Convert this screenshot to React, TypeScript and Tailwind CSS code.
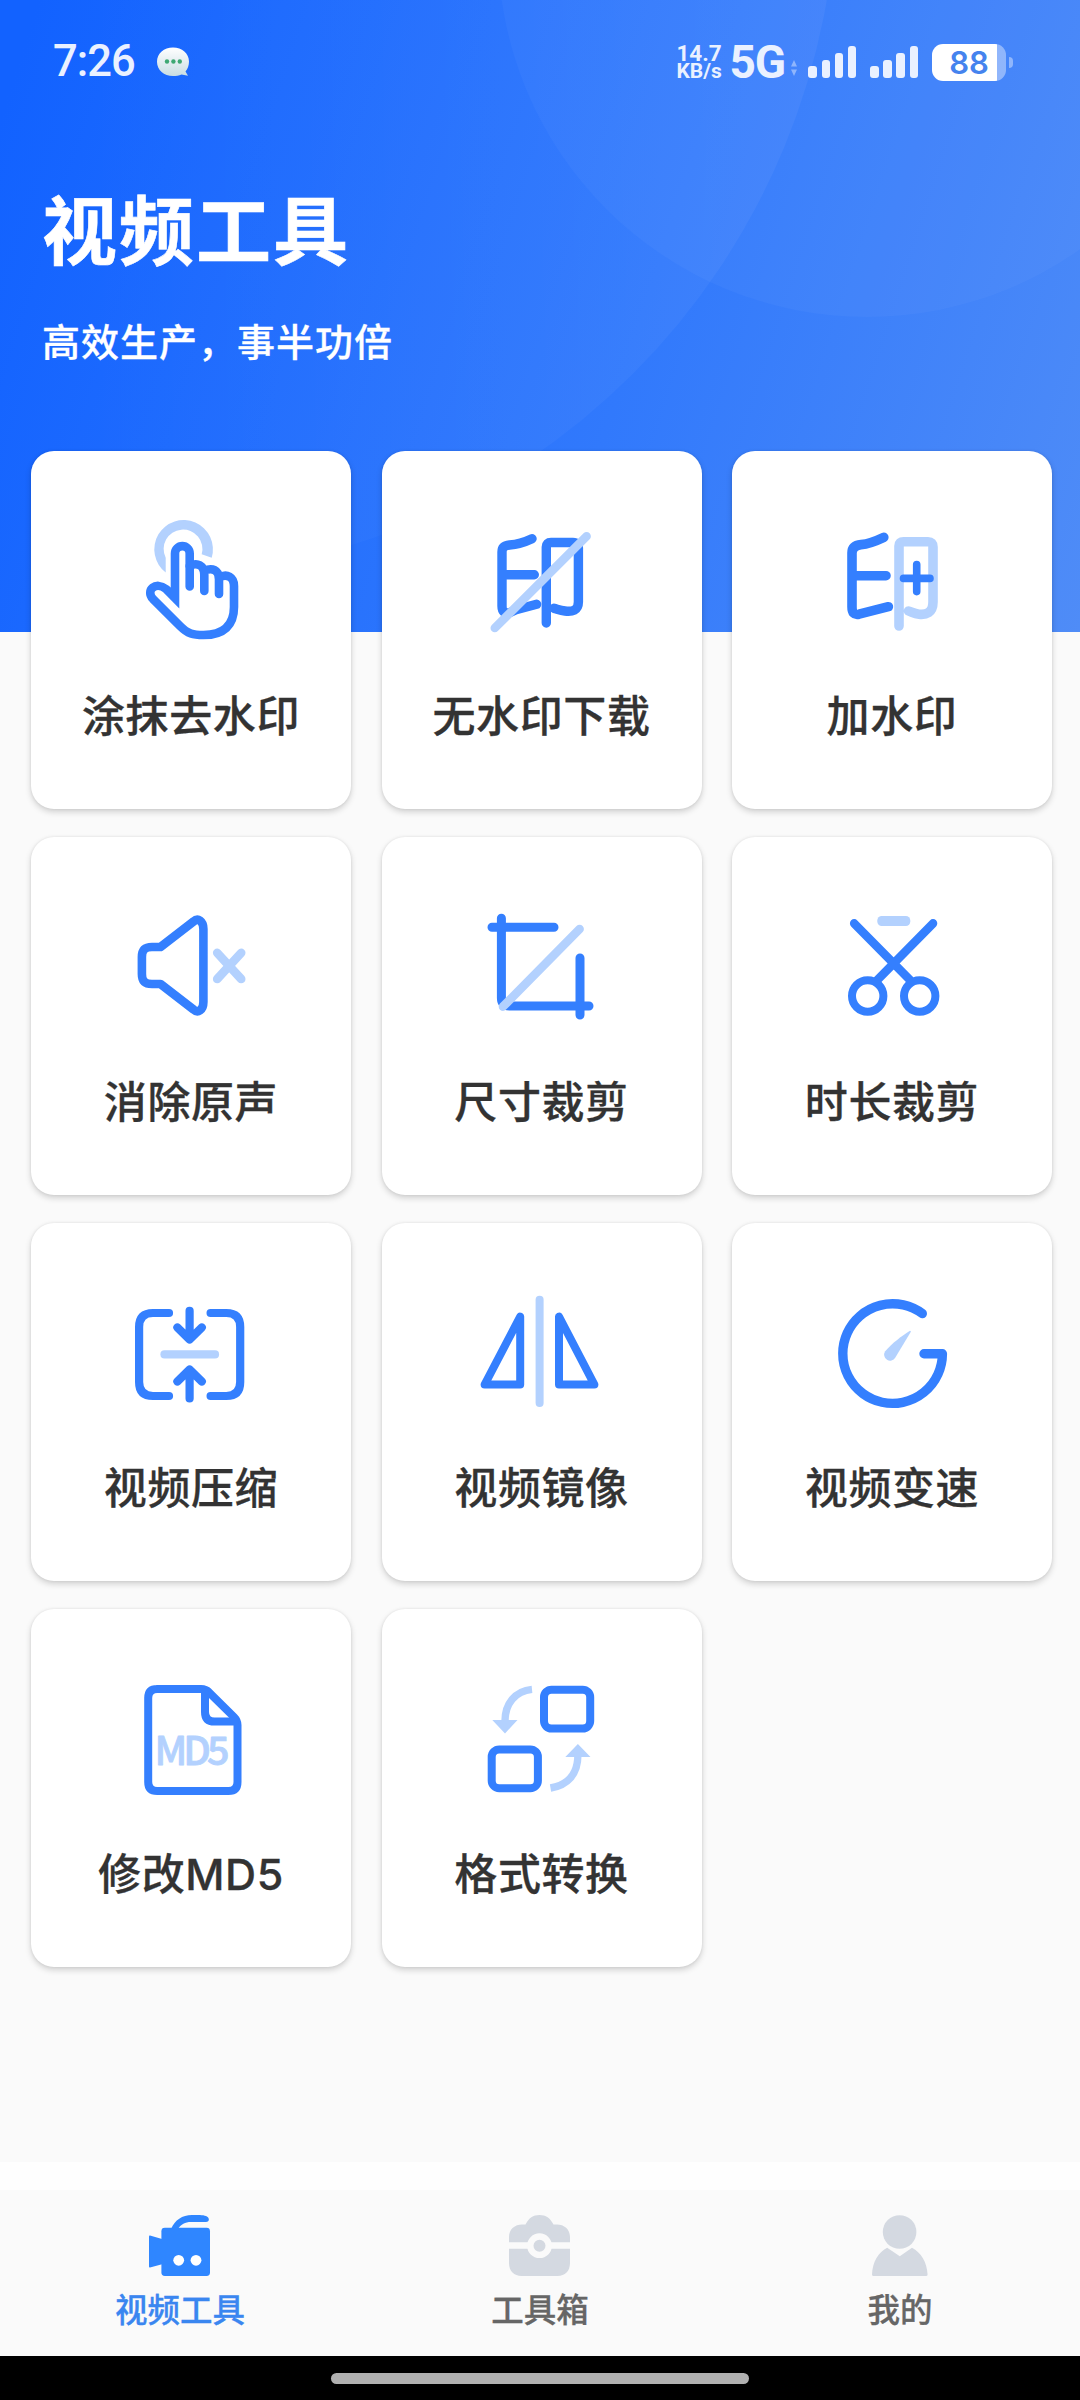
import React from "react"

const BLUE = "#347FFE"
const LIGHT = "#B3D1FE"

// Shared canvas for the tool icons
const ToolIcon = ({ children }: { children: React.ReactNode }) => (
  <svg
    viewBox="0 0 140 140"
    className="w-[140px] h-[140px] shrink-0"
    fill="none"
    stroke={BLUE}
    strokeWidth="8.6"
    strokeLinecap="round"
    strokeLinejoin="round"
  >
    {children}
  </svg>
)

const SmearIcon = () => (
  <ToolIcon>
    <path
      d="M44.7 62.5 A29.3 29.3 0 1 1 90.7 47.7 L80.7 44.3 A19.4 19.4 0 1 0 44.7 47.7 Z"
      fill={LIGHT}
      stroke="none"
    />
    <path
      d="M68.7 76.5 V43.5 A7.35 7.35 0 0 0 54 43.5 V88 L45 79 C35 71 24 80 32 89 L59 116 C67 124 72 125 82.5 125 C103 125 113 115 113 97 V76 C113 67 106 63 98 67.5"
      strokeLinejoin="miter"
    />
    <path d="M68.7 56 C76 52 83.3 55 83.3 65 V81 M83.3 61 C91 57 98 60 98 69 V84" />
  </ToolIcon>
)

const DownloadIcon = () => (
  <ToolIcon>
    <g strokeWidth="9.4">
      <path d="M60 28.7 C53 32 45 34.5 37.5 35 C32 35.5 30 38 30 42 V96 C30 101.5 32.5 104 38 102.5 L44 99.8 L64.6 94.3 M32 64.7 H62.3" />
      <path d="M74.3 113 V37 Q74.3 32.5 79 32.5 H101 Q106.4 32.5 106.4 38 V92 C106.4 100.5 100 102 93 101 C88 100.3 85 99 82 98.3" />
    </g>
    <path d="M114.6 26.3 L22.8 118" stroke={LIGHT} />
  </ToolIcon>
)

const WatermarkIcon = () => (
  <ToolIcon>
    <g strokeWidth="9.6">
      <path d="M61.8 27.3 C54 31 46 34 39 34.6 C33 35.2 30 38 30 43 V97 C30 102.5 32 105.3 37 104.2 L66.4 96.7 M32 65.7 H64" />
      <path
        d="M77 116 V36 Q77 31.8 81.5 31.8 H106 Q111 31.8 111 37 V92 C111 103 104 105 97 104.2 C92 103.6 90 102 86.5 101"
        stroke={LIGHT}
      />
    </g>
    <path d="M81.5 68.4 H108 M94.7 54.6 V81.6" strokeWidth="7.6" />
  </ToolIcon>
)

const MuteIcon = () => (
  <ToolIcon>
    <path d="M31 51 H39.5 L72.5 25.5 C77 21.5 82.4 25 82.4 33 V106 C82.4 114 77 117.5 72.5 113.5 L39.5 88 H31 C23 88 20.9 84 20.9 78 V61 C20.9 55 23 51 31 51 Z" />
    <path d="M96.2 56.8 L120.2 83 M120.2 56.8 L96.2 83" stroke={LIGHT} />
  </ToolIcon>
)

const CropIcon = () => (
  <ToolIcon>
    <path d="M29.4 22.3 V102 Q29.4 110 37.4 110 H117 M20 31.3 H82 M108 62 V119" strokeWidth="9" />
    <path d="M107.6 33 L31 110.6" stroke={LIGHT} />
  </ToolIcon>
)

const ScissorsIcon = () => (
  <ToolIcon>
    <rect x="55.3" y="20" width="33" height="10" rx="4.4" fill={LIGHT} stroke="none" />
    <path d="M32.2 27.4 L88 84 M111 27.4 L54.6 84.8" />
    <circle cx="45.7" cy="100" r="15.7" strokeWidth="8" />
    <circle cx="97.7" cy="100" r="15.7" strokeWidth="8" />
  </ToolIcon>
)

const CompressIcon = () => (
  <ToolIcon>
    <g strokeWidth="8.2">
      <path d="M48 31 H32 Q18.1 31 18.1 45 V100 Q18.1 114 32 114 H48 M89.6 31 H105.3 Q119.2 31 119.2 45 V100 Q119.2 114 105.3 114 H89.6" />
      <path d="M68.6 28.8 V55 M56.4 45.5 L68.6 57.5 L80.8 45.5 M68.6 116.4 V90 M56.4 99.5 L68.6 87.5 L80.8 99.5" />
      <path d="M43.5 72.4 H94" stroke={LIGHT} />
    </g>
  </ToolIcon>
)

const MirrorIcon = () => (
  <ToolIcon>
    <path d="M67.6 17.7 V121" stroke={LIGHT} strokeWidth="8" />
    <path d="M48.2 34.6 V102.6 H12.6 Z M87 34.6 V102.6 H122.4 Z" strokeWidth="8" />
  </ToolIcon>
)

const SpeedIcon = () => (
  <ToolIcon>
    <path d="M100.3 31.6 A49.8 49.8 0 1 0 120.4 71.7 H102" strokeWidth="9.4" />
    <path d="M89 49.4 L73.2 75.8 A5.8 5.8 0 1 1 63 69.6 C70 61 80 54 88 48.8 Z" fill={LIGHT} stroke="none" />
  </ToolIcon>
)

const Md5Icon = () => (
  <ToolIcon>
    <g strokeWidth="8">
      <path d="M36 21 H80 Q85 21 88 24.3 L113 49 Q116.5 52.5 116.5 57 V114 Q116.5 123 107.5 123 H36.2 Q27.2 123 27.2 114 V30 Q27.2 21 36.2 21 Z" />
      <path d="M84 24 V44 Q84 53.6 93.5 53.6 H114" />
    </g>
    <text
      x="33.5"
      y="97"
      fill={LIGHT}
      stroke={LIGHT}
      strokeWidth="0.8"
      fontSize="39.5"
      textLength="75"
      lengthAdjust="spacing"
      className="font-['Noto_Sans_CJK_SC',sans-serif] font-medium"
    >
      MD5
    </text>
  </ToolIcon>
)

const ConvertIcon = () => (
  <ToolIcon>
    <rect x="72" y="21.7" width="46.2" height="38.8" rx="7.5" strokeWidth="8" />
    <rect x="19.7" y="81.4" width="46.2" height="38.8" rx="7.5" strokeWidth="8" />
    <g stroke={LIGHT} strokeWidth="7.4" strokeLinecap="butt">
      <path d="M60 21.4 C43 23 33 36 33 53" />
      <path d="M78.5 120 C96 117 105.9 106 105.9 87" />
    </g>
    <path d="M20.3 52 H45.5 L33 65.4 Z M93.3 89 H118.5 L105.9 76 Z" fill={LIGHT} stroke="none" />
  </ToolIcon>
)

const tools = [
  { name: "涂抹去水印", icon: <SmearIcon /> },
  { name: "无水印下载", icon: <DownloadIcon /> },
  { name: "加水印", icon: <WatermarkIcon /> },
  { name: "消除原声", icon: <MuteIcon /> },
  { name: "尺寸裁剪", icon: <CropIcon /> },
  { name: "时长裁剪", icon: <ScissorsIcon /> },
  { name: "视频压缩", icon: <CompressIcon /> },
  { name: "视频镜像", icon: <MirrorIcon /> },
  { name: "视频变速", icon: <SpeedIcon /> },
  { name: "修改MD5", icon: <Md5Icon /> },
  { name: "格式转换", icon: <ConvertIcon /> },
]

const CameraIcon = () => (
  <svg viewBox="0 0 62 62" className="w-[62px] h-[62px]" fill="#2F86FF">
    <path d="M22 14 C26 5 33 0 43 0 C49 -.3 54 0 57 1 C61 2.6 60.6 7 57 7 H42 C36 7 32 9.5 29.3 13.5 Z" />
    <rect x="12.4" y="12.8" width="48.6" height="48.2" rx="3.4" />
    <path d="M1 20.6 L13 24 V49.2 L1 52.4 Q0 52.6 0 51.4 V21.6 Q0 20.4 1 20.6 Z" />
    <circle cx="29.7" cy="45.3" r="5.4" fill="#FFFFFF" />
    <circle cx="47" cy="45.3" r="5.4" fill="#FFFFFF" />
  </svg>
)

const ToolboxIcon = () => (
  <svg viewBox="0 0 62 62" className="w-[62px] h-[62px]" fill="#D4D9E1">
    <path d="M0 27.3 V22 C0 14 6 9.4 13 9.4 H16.5 C20 3 24 0 30.5 0 C37 0 41 3 44.5 9.4 H48 C55 9.4 61 14 61 22 V27.3 Z" />
    <path d="M0 33.7 H61 V48 C61 56 56 61 48.5 61 H12.5 C5 61 0 56 0 48 Z" />
    <circle cx="30.5" cy="30.7" r="9.2" stroke="#FAFAFA" strokeWidth="6.4" />
  </svg>
)

const PersonIcon = () => (
  <svg viewBox="0 0 62 62" className="w-[62px] h-[62px]" fill="#D4D9E1">
    <circle cx="30.6" cy="17" r="16.8" />
    <path d="M18.2 32.8 L30.8 41.2 L43 32.8 C52 37.5 58 47 58.6 59.5 Q58.6 61 57 61 H4.6 Q3 61 3 59.5 C3.6 47 9 37.5 18.2 32.8 Z" />
  </svg>
)

const tabs = [
  { name: "视频工具", icon: <CameraIcon />, active: true },
  { name: "工具箱", icon: <ToolboxIcon />, active: false },
  { name: "我的", icon: <PersonIcon />, active: false },
]

const Signal = () => (
  <div className="flex items-end gap-[4.6px] h-8">
    <div className="w-[8.5px] h-[12px] rounded-[3px] bg-[#EAF1FF]" />
    <div className="w-[8.5px] h-[18px] rounded-[3px] bg-[#EAF1FF]" />
    <div className="w-[8.5px] h-[25px] rounded-[3px] bg-[#EAF1FF]" />
    <div className="w-[8.5px] h-8 rounded-[3px] bg-[#EAF1FF]" />
  </div>
)

const StatusBar = () => (
  <div className="relative flex h-[124px] items-center justify-between pl-[53px] pr-[67px] font-['Roboto','Liberation_Sans',sans-serif] text-[#EAF1FF]">
    <div className="flex items-center">
      <span className="w-[104px] text-[43.5px] leading-none font-medium tracking-[-1px]">7:26</span>
      <svg viewBox="0 0 34 32" className="w-[34px] h-8">
        <defs>
          <linearGradient id="bubble" x1="0" y1="0" x2="0" y2="1">
            <stop offset="0" stopColor="#FFFFFF" />
            <stop offset="1" stopColor="#C9DDE2" />
          </linearGradient>
        </defs>
        <path
          d="M16 1.5 C25 1.5 32 7.5 32 15.5 C32 20 30.5 23 28.5 25.5 L31 29.8 L24.5 28.4 C22 29.6 19 30 16 30 C7 30 0 24 0 15.7 C0 7.5 7 1.5 16 1.5 Z"
          fill="url(#bubble)"
        />
        <circle cx="10" cy="15.5" r="2.2" fill="#3FA873" />
        <circle cx="16.4" cy="15.5" r="2.2" fill="#3FA873" />
        <circle cx="22.8" cy="15.5" r="2.2" fill="#3FA873" />
      </svg>
    </div>

    <div className="flex items-center">
      <div className="w-[53px] font-bold leading-[18px]">
        <div className="text-[22.5px]">14.7</div>
        <div className="text-[21px]">KB/s</div>
      </div>
      <span className="w-[61px] text-[46px] leading-none font-bold tracking-[-1px]">5G</span>
      <svg viewBox="0 0 8 16" className="mt-3 mr-[10px] w-2 h-4" fill="#8FB5FC">
        <path d="M4 0 L7 6.6 H1 Z M4 16 L7 9.4 H1 Z" />
      </svg>
      <Signal />
      <div className="w-[14px]" />
      <Signal />
      <div className="ml-[14px] flex h-[37px] w-[74px] items-center justify-center overflow-hidden rounded-[11px] bg-linear-to-r from-white from-[88%] to-white/40 to-[88%]">
        <span className="font-['Inter',sans-serif] text-[31px] leading-none font-semibold text-[#4583EE]">88</span>
      </div>
      <div className="ml-[3px] h-[11px] w-[4px] rounded-r-full bg-white/40" />
    </div>
  </div>
)

export default function VideoToolsPage() {
  return (
    <div className="flex h-[2400px] w-[1080px] flex-col overflow-hidden bg-[#FAFAFA] font-['Noto_Sans_CJK_SC',sans-serif]">
      {/* Header */}
      <header className="relative h-[632px] shrink-0 overflow-hidden bg-[linear-gradient(108deg,#1262FF_3%,#3179FC_58%,#4F8CF7_100%)]">
        <svg viewBox="0 0 1080 632" className="absolute inset-0 h-full w-full">
          <defs>
            <linearGradient id="glow" x1="0" y1="0" x2="1" y2="0">
              <stop offset="0.45" stopColor="#FFFFFF" stopOpacity="0" />
              <stop offset="1" stopColor="#FFFFFF" stopOpacity="0.05" />
            </linearGradient>
          </defs>
          <circle cx="140" cy="-119" r="697" fill="url(#glow)" />
          <circle cx="867" cy="-52" r="369" fill="#FFFFFF" fillOpacity="0.03" />
        </svg>
        <StatusBar />
        <div className="relative pl-[42px] text-white">
          <h1 className="mt-[49px] text-[75px] leading-[108px] font-bold tracking-[2px] [-webkit-text-stroke:0.6px_white]">
            视频工具
          </h1>
          <p className="mt-[32px] text-[38px] leading-[54px] font-medium tracking-[1px] [-webkit-text-stroke:0.3px_white]">
            高效生产，事半功倍
          </p>
        </div>
      </header>

      {/* Tool grid */}
      <main className="relative -mt-[181px] grid grid-cols-3 gap-x-[30.5px] gap-y-7 pl-[31px] pr-[28px]">
        {tools.map((tool) => (
          <div
            key={tool.name}
            className="flex h-[358px] flex-col items-center rounded-[23px] bg-white pt-[59px] shadow-[0_3px_6px_rgba(0,0,0,0.17),0_0_3px_rgba(0,0,0,0.08)]"
          >
            {tool.icon}
            <span className="mt-[36px] font-['Inter','Noto_Sans_CJK_SC',sans-serif] text-[43px] leading-[60px] font-medium tracking-[0.6px] text-[#333333] [-webkit-text-stroke:0.3px_#333333]">
              {tool.name}
            </span>
          </div>
        ))}
      </main>

      {/* Bottom navigation */}
      <nav className="mt-auto shrink-0">
        <div className="h-7 bg-[#FEFEFE]" />
        <div className="grid h-[166px] grid-cols-3">
          {tabs.map((tab) => (
            <div key={tab.name} className="flex flex-col items-center pt-[25px]">
              {tab.icon}
              <span
                className={`mt-[8px] text-[32.5px] leading-[46px] font-medium [-webkit-text-stroke:0.3px] ${tab.active ? "text-[#3A86F0]" : "text-[#666666]"}`}
              >
                {tab.name}
              </span>
            </div>
          ))}
        </div>
        <div className="flex h-11 justify-center bg-black pt-[17px]">
          <div className="h-[11px] w-[418px] rounded-full bg-[#B0B0B0]" />
        </div>
      </nav>
    </div>
  )
}
